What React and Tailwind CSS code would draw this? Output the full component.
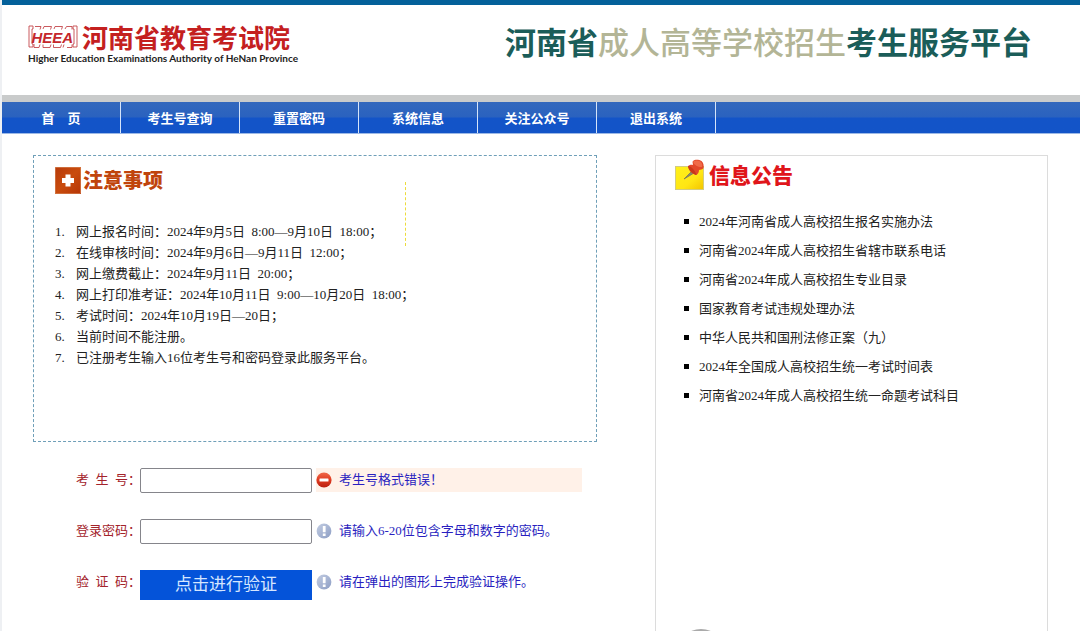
const navItems = ["首　页", "考生号查询", "重置密码", "系统信息", "关注公众号", "退出系统"];

const notices = [
  "网上报名时间：2024年9月5日  8:00—9月10日  18:00；",
  "在线审核时间：2024年9月6日—9月11日  12:00；",
  "网上缴费截止：2024年9月11日  20:00；",
  "网上打印准考证：2024年10月11日  9:00—10月20日  18:00；",
  "考试时间：2024年10月19日—20日；",
  "当前时间不能注册。",
  "已注册考生输入16位考生号和密码登录此服务平台。",
];

const news = [
  "2024年河南省成人高校招生报名实施办法",
  "河南省2024年成人高校招生省辖市联系电话",
  "河南省2024年成人高校招生专业目录",
  "国家教育考试违规处理办法",
  "中华人民共和国刑法修正案（九）",
  "2024年全国成人高校招生统一考试时间表",
  "河南省2024年成人高校招生统一命题考试科目",
];

function HeeaMark() {
  return (
    <svg width="50" height="24" viewBox="0 0 50 24" fill="none" stroke="#c4474c" strokeWidth="0.9" aria-hidden="true">
      <path d="M1 1h4v3H4v15h1v3H1zM49 1h-4v3h1v15h-1v3h4z" />
      <path d="M7 1.500h6l-1 3M15 4l1-2.500h7.500l-1 3M26 4l1-2.500h7.500l-1 3M37 4l1.500-2.500h5.500v3" />
      <path d="M6 19v3.500h5l1-3M15 19.500v3h7l1-3M25.500 19.500v3h7l1-3M36 19.500l-1 3M39 22.500h5v-3" />
      <text
        x="3.500"
        y="17.500"
        fontFamily="Liberation Sans, sans-serif"
        fontWeight="bold"
        fontStyle="italic"
        fontSize="15"
        fill="#c4272c"
        stroke="none"
      >
        HEEA
      </text>
    </svg>
  );
}

function PlusIcon() {
  return (
    <svg width="26" height="27" viewBox="0 0 26 27" aria-hidden="true">
      <defs>
        <linearGradient id="plusBg" x1="0" y1="0" x2="1" y2="1">
          <stop offset="0" stopColor="#b63a0a" />
          <stop offset="0.5" stopColor="#c94c0e" />
          <stop offset="1" stopColor="#b53507" />
        </linearGradient>
      </defs>
      <rect width="26" height="27" fill="url(#plusBg)" />
      <rect x="0.5" y="0.5" width="25" height="26" fill="none" stroke="#d98a5c" strokeWidth="0.6" />
      <path d="M10.5 7.5h5V11H19v5h-3.500v3.500h-5V16H7v-5h3.500z" fill="#fff" />
    </svg>
  );
}

function PinIcon() {
  return (
    <svg width="30" height="32" viewBox="0 0 30 32" aria-hidden="true">
      <defs>
        <linearGradient id="noteBg" x1="0" y1="0" x2="1" y2="1">
          <stop offset="0" stopColor="#fff11a" />
          <stop offset="0.6" stopColor="#ffe614" />
          <stop offset="1" stopColor="#f3c400" />
        </linearGradient>
      </defs>
      <rect x="0.500" y="7.500" width="28" height="23" fill="url(#noteBg)" stroke="#d3cc80" />
      <path d="M9 20l8-8 2 2z" fill="#8b8b6a" stroke="#77775c" strokeWidth="0.8" />
      <path d="M13 7c2-1.500 4-1.500 5-1 0-2-1-3 0-4 2-2 6-1.500 8.500 0 2 1.500 2.500 5 2 7-1 2-3 1.500-4.500 2 0 2-1 4-2.500 5-3-.5-8-4-8.500-9z" fill="#e2482a" />
      <path d="M18 2.500c2-1.500 5-1.500 7.500 0 2 2 2 4 1.500 5.500-3 .5-8-1.500-9-5.500z" fill="#f06a48" />
      <path d="M13 7c3 0 7 4 8.500 9-3-.5-8-4-8.500-9z" fill="#c9371a" />
    </svg>
  );
}

function ErrorIcon() {
  return (
    <svg width="16" height="16" viewBox="0 0 16 16" className="shrink-0" aria-hidden="true">
      <defs>
        <linearGradient id="errBg" x1="0" y1="0" x2="0" y2="1">
          <stop offset="0" stopColor="#f0694a" />
          <stop offset="0.5" stopColor="#df3a20" />
          <stop offset="1" stopColor="#b81f10" />
        </linearGradient>
      </defs>
      <circle cx="8" cy="8" r="7.600" fill="url(#errBg)" />
      <rect x="3.500" y="6.500" width="9" height="3" rx="0.500" fill="#fff" />
    </svg>
  );
}

function HintIcon() {
  return (
    <svg width="16" height="16" viewBox="0 0 16 16" className="shrink-0" aria-hidden="true">
      <defs>
        <linearGradient id="hintBg" x1="0" y1="0" x2="1" y2="1">
          <stop offset="0" stopColor="#c3cde2" />
          <stop offset="1" stopColor="#8c9dc4" />
        </linearGradient>
      </defs>
      <circle cx="8" cy="8" r="7.400" fill="url(#hintBg)" />
      <path d="M6.800 3h2.800v6.200H6.800zM6.800 10.500h2.800V13H6.800z" fill="#fff" />
    </svg>
  );
}

function Field({ label, htmlFor, tip, error, children }) {
  return (
    <div className="flex min-h-[25px] items-start">
      <label htmlFor={htmlFor} className="w-16 shrink-0 leading-6 whitespace-pre text-[#a3232b]">
        {label}
      </label>
      <div className="w-[172px] shrink-0">{children}</div>
      <div
        className={
          error
            ? "ml-1 flex h-6 flex-1 items-center gap-[7px] bg-[#fff1e8]"
            : "ml-1 flex h-6 flex-1 items-center gap-[7px]"
        }
      >
        {error ? <ErrorIcon /> : <HintIcon />}
        <span className="text-[#2a1fc0]">{tip}</span>
      </div>
    </div>
  );
}

export default function App() {
  return (
    <div className="flex h-screen flex-col overflow-hidden border-l-2 border-[#eef0f3] bg-white font-['Liberation_Serif','Noto_Sans_CJK_SC',sans-serif] text-[13px] text-[#222]">
      <header className="flex h-[102px] shrink-0 items-start justify-between border-t-5 border-b-7 border-t-[#04619a] border-b-[#c9cbcb] pr-12 pl-[26px]">
        <div className="pt-5">
          <div className="flex h-6 items-center gap-1">
            <HeeaMark />
            <span className="font-['Noto_Sans_CJK_SC',sans-serif] text-[26px] leading-6 font-bold text-[#c4201f]">
              河南省教育考试院
            </span>
          </div>
          <p className="font-['Lato',sans-serif] text-[10px] leading-[18px] font-bold text-[#222]">
            Higher Education Examinations Authority of HeNan Province
          </p>
        </div>
        <h1 className="pt-4 font-['Noto_Sans_CJK_SC',sans-serif] text-[31px] leading-10 font-bold text-[#1b5d59]">
          河南省<span className="font-medium text-[#b3b596]">成人高等学校招生</span>考生服务平台
        </h1>
      </header>

      <nav className="flex h-8 shrink-0 border-b border-[#9db9e6] bg-linear-to-b from-[#3368bd] from-0% via-[#2a62bf] via-48% to-[#1354c8] to-52%">
        {navItems.map((item) => (
          <a
            key={item}
            href="#"
            className="flex w-[119px] items-center justify-center border-r border-[#d5e4fa] font-['Noto_Sans_CJK_SC',sans-serif] font-bold text-white"
          >
            {item}
          </a>
        ))}
      </nav>

      <main className="grid flex-1 grid-cols-[564fr_393fr] gap-[58px] pt-[21px] pr-8 pl-[31px]">
        <div>
          <section className="relative h-[287px] border border-dashed border-[#6f9fb8] pt-[10px] pl-[21px]">
            <h2 className="flex h-7 items-center gap-0.5 font-['Noto_Sans_CJK_SC',sans-serif] text-xl font-black text-[#c0440c]">
              <PlusIcon />
              注意事项
            </h2>
            <ol className="mt-[27px] leading-[21px]">
              {notices.map((text, i) => (
                <li key={text} className="flex whitespace-pre">
                  <span className="w-[21px] shrink-0">{i + 1}.</span>
                  {text}
                </li>
              ))}
            </ol>
            <div className="absolute top-[26px] left-[371px] h-16 border-l border-dashed border-[#ecdc3c]" />
          </section>

          <form className="mt-[26px] flex flex-col gap-[26px] pr-[15px] pl-[43px]" onSubmit={(e) => e.preventDefault()}>
            <Field label="考  生  号：" htmlFor="account" tip="考生号格式错误！" error>
              <input id="account" type="text" className="block h-[25px] w-full rounded-xs border border-[#85858b] px-1" />
            </Field>
            <Field label="登录密码：" htmlFor="password" tip="请输入6-20位包含字母和数字的密码。">
              <input id="password" type="password" className="block h-[25px] w-full rounded-xs border border-[#85858b] px-1" />
            </Field>
            <Field label="验  证  码：" htmlFor="verify" tip="请在弹出的图形上完成验证操作。">
              <button id="verify" type="button" className="block h-[30px] w-full bg-[#0453d9] text-[17px] text-[#d5e6ff]">
                点击进行验证
              </button>
            </Field>
          </form>
        </div>

        <aside className="flex flex-col border border-b-0 border-[#dcdcdc] pt-[3px] pl-[19px]">
          <h2 className="flex h-8 items-center gap-1 font-['Noto_Sans_CJK_SC',sans-serif] text-[21px] font-black text-[#e0161b]">
            <PinIcon />
            信息公告
          </h2>
          <ul className="mt-4 pl-[9px] leading-[29px]">
            {news.map((title) => (
              <li key={title} className="flex items-center gap-[10px]">
                <span className="size-[5px] bg-black" />
                <a href="#">{title}</a>
              </li>
            ))}
          </ul>
          <svg width="20" height="2" viewBox="0 0 20 2" className="mt-auto ml-4" aria-hidden="true">
            <circle cx="10" cy="24" r="24" fill="#aaa" />
          </svg>
        </aside>
      </main>
    </div>
  );
}
